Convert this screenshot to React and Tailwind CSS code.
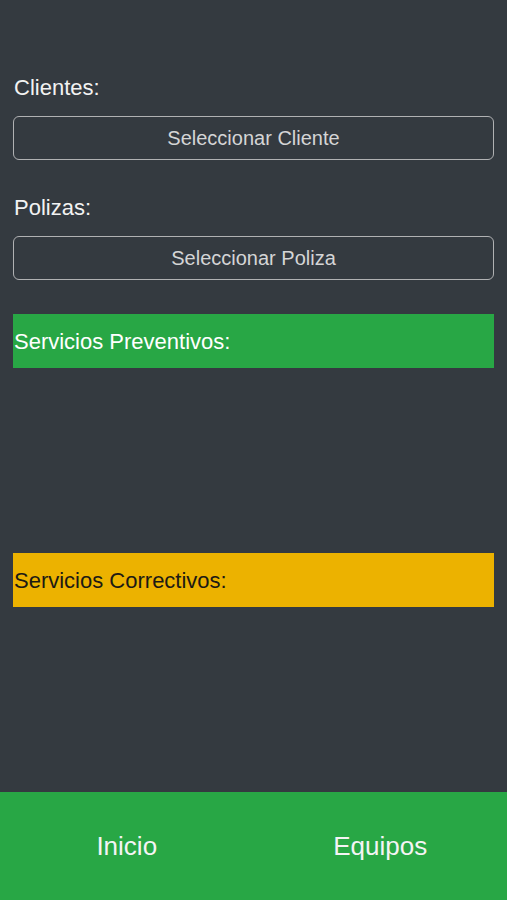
import React from "react";

const SelectButton = ({ label }) => (
  <button className="w-full h-[44px] rounded-[6px] border-[1.5px] border-[#b0b1b3] text-[20px] text-[#d4d5d6] bg-transparent">
    {label}
  </button>
);

const SectionBar = ({ title, className }) => (
  <div className={`h-[54px] flex items-center pl-px text-[22px] ${className}`}>
    {title}
  </div>
);

export default function App() {
  return (
    <div
      className="h-[900px] w-full flex flex-col bg-[#343a40]"
      style={{ fontFamily: '"Liberation Sans", Arial, sans-serif' }}
    >
      <div className="flex-1 px-[13px]">
        <p className="mt-[76px] h-[24px] leading-[24px] pl-px text-[22px] text-[#f2f2f2]">
          Clientes:
        </p>
        <div className="mt-[16px]">
          <SelectButton label="Seleccionar Cliente" />
        </div>

        <p className="mt-[36px] h-[24px] leading-[24px] pl-px text-[22px] text-[#f2f2f2]">
          Polizas:
        </p>
        <div className="mt-[16px]">
          <SelectButton label="Seleccionar Poliza" />
        </div>

        <div className="mt-[34px]">
          <SectionBar title="Servicios Preventivos:" className="bg-[#28a745] text-white" />
        </div>

        <div className="mt-[185px]">
          <SectionBar title="Servicios Correctivos:" className="bg-[#ecb200] text-[#1c1a14]" />
        </div>
      </div>

      <nav className="h-[108px] grid grid-cols-2 bg-[#28a745] text-[26px] text-[#f4f4f4]">
        <button className="flex items-center justify-center">Inicio</button>
        <button className="flex items-center justify-center">Equipos</button>
      </nav>
    </div>
  );
}
